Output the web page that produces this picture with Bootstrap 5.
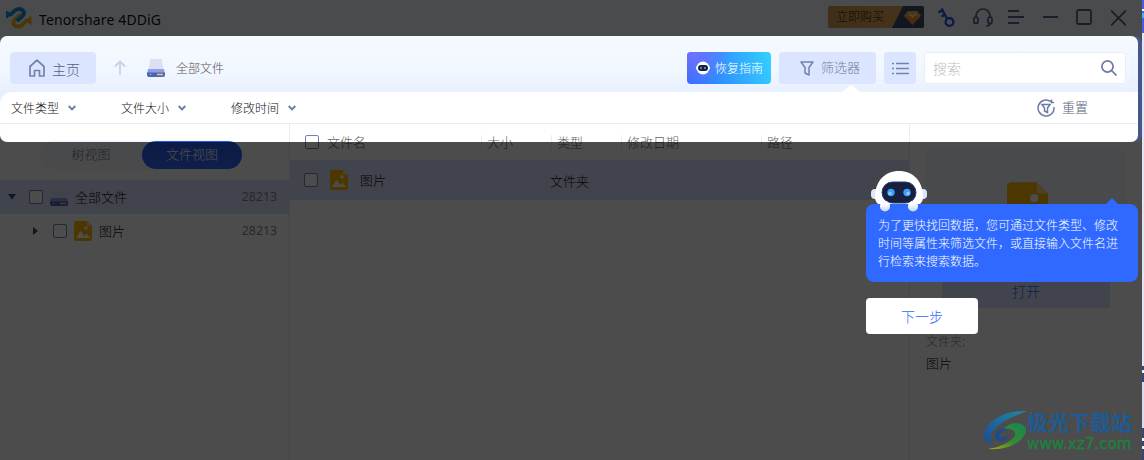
<!DOCTYPE html>
<html lang="zh-CN">
<head>
<meta charset="utf-8">
<title>Tenorshare 4DDiG</title>
<link href="https://cdn.jsdelivr.net/npm/bootstrap@5.3.0/dist/css/bootstrap.min.css" rel="stylesheet">
<style>
body{width:1144px;height:460px;overflow:hidden;background:#eef1f8;font-family:"Liberation Sans","Noto Sans CJK SC Light","Noto Sans CJK SC",sans-serif;font-weight:300;font-size:13px;line-height:18px;color:#111;position:relative}
svg{display:block;flex:none}
.app{width:1142px;height:460px;background:#fff}
.titlebar{height:36px;background:#f7fbff;padding-left:5px}
.brand{font:14px/18px "Noto Sans","Noto Sans CJK SC",sans-serif;letter-spacing:.13px;color:#10141f;margin:3px 0 0 7px}
.buy{width:96px;height:22px;background:linear-gradient(90deg,#d79e51,#e4a957 65%);border-radius:2px;font-size:12px;color:#231a10;overflow:hidden;margin-top:-3px}
.toolbar{height:56px;background:linear-gradient(#f5faff,#f2f7ff 60%,#e8f0fe)}
.tool{height:32px;background:#dbe5ff;border-radius:4px;color:#7581a5}
.guide{width:84px;background:linear-gradient(75deg,#2e6bff 0,#30a0ff 52%,#35d0ff 100%);color:#fff;font-size:12px;position:relative}
.guide:before{content:"";position:absolute;inset:0;border-radius:4px;background:radial-gradient(circle at 8% 0,#746fff 0,rgba(116,111,255,0) 45%)}
.guide>*{position:relative}
.search{width:202px;height:32px;background:#fff;border:1px solid #e7edfb;border-radius:4px;color:#bcbcbc;padding:0 8px}
.filters{height:32px;background:#fff;border-bottom:1px solid #e9ebf7;font-size:12px;border-radius:12px 16px 0 0;position:relative}
.filterwrap{background:#e8f0fe}
.notch{position:absolute;left:842px;top:-7px}
.fitem{width:110px}
.fitem span{padding-top:2px}
.side{width:290px;border-right:1px solid #e9ebf7}
.pills{width:202px;height:30px;margin:16px 0 0 40px;border-radius:15px;background:#f5f8ff;color:#777}
.pill-on{width:100px;height:28px;border-radius:14px;background:linear-gradient(180deg,#2a5be8,#3269f5);color:#fff}
.noderow{height:34px}
.sel{background:#dbe5ff}
.chk{width:14px;height:14px;border:1px solid #7682a8;border-radius:2px;background:#fff;flex:none}
.cnt{color:#888;font:12.3px/18px "Noto Sans",sans-serif}
.mainpane{width:620px;border-right:1px solid #e9ebf7}
.thead{height:36px;color:#666}
.hcell{border-left:1px solid #e9ebf7;height:14px;line-height:16px;padding-left:5px}
.filerow{height:40px}
.preview{width:200px;height:124px;background:#f5f8ff;border-radius:8px;margin:24px 0 0 16px}
.openbtn{width:168px;height:36px;border-radius:4px;color:#2f69ff;margin:0 0 0 32px;font-size:14px}
.spot{position:absolute;left:0;top:36px;width:1138px;height:106px;border-radius:7px;box-shadow:0 0 0 1200px rgba(0,0,0,.7);pointer-events:none}
.spotside{position:absolute;left:1130px;top:36px;width:12px;height:106px;background:#43578a;border-radius:0 7px 7px 0}
.spotside:before{content:"";position:absolute;left:0;top:0;width:8px;height:106px;border-radius:0 7px 7px 0;background:linear-gradient(#f5faff,#e8f0fe 56px,#fff 56px)}
.spotside:after{content:"";position:absolute;left:0;top:56px;width:8px;height:32px;background:linear-gradient(#fff,#fff 31px,#e9ebf7 31px);border-top-right-radius:8px}
.edge{position:absolute;left:1142px;top:0;width:2px;height:460px;background:linear-gradient(#4a5be0 0 9px,#fff 9px 11px,#4a5be0 11px 13px,#38b7e8 13px 18px,#4a5be0 18px 33px,#e2e4f0 33px 366px,#3c4470 366px 370px,#eef1f8 370px 373px,#3c4470 373px 382px,#d8dcec 382px 428px,#3c4470 428px 438px,#eef1f8 438px 441px,#3c4470 441px 446px,#eef1f8 446px 449px,#3c4470 449px)}
.tip{position:absolute;left:866px;top:204px;width:272px;height:78px;border-radius:8px;background:#2f69ff;color:#fff;font-size:12px;line-height:18px;padding:12.6px 0 0 12px}
.tip:after{content:"";position:absolute;right:20px;top:-6px;border:6px solid transparent;border-top:0;border-bottom-color:#2f69ff}
.bot{position:absolute;left:869px;top:169px}
.next{position:absolute;left:866px;top:298px;width:112px;height:36px;border-radius:4px;background:#fff;color:#2f69ff;font-size:14px;font-weight:300;border:0;padding:2px 0 0}
.wm{position:absolute;left:983px;top:408px}
.wm-cn{font:700 21px/24px "Noto Sans CJK SC",sans-serif;color:#1d5b96;white-space:nowrap}
.wm-url{font:15.2px/15px "DejaVu Sans",sans-serif;color:#1f8040;-webkit-text-stroke:.4px #1f8040;white-space:nowrap;margin-top:4px}
.wm-copy{position:absolute;left:44px;top:1px}
</style>
</head>
<body>
<svg width="0" height="0" class="position-absolute">
<defs>
<symbol id="disk" viewBox="0 0 18 18"><path d="M3 0h12l1.500 11h-15z" fill="#dbe1f2"/><path d="M1.200 10h15.600L18 14H0z" fill="#8d9fe8"/><path d="M0 13.500h18V16a2 2 0 0 1-2 2H2a2 2 0 0 1-2-2z" fill="#4d65ae"/><rect x="10" y="14.700" width="6" height="1.600" fill="#ecc16d"/><path d="M3 15.500h1" stroke="#8df0ff"/></symbol>
<symbol id="pic" viewBox="0 0 18 20"><path d="M2 0h11l5 5v13a2 2 0 0 1-2 2H2a2 2 0 0 1-2-2V2a2 2 0 0 1 2-2z" fill="#ffb800"/><path d="M13 0l5 5h-3.500A1.500 1.500 0 0 1 13 3.500z" fill="#ffd978"/><circle cx="12" cy="7" r="1.800" fill="#fff"/><path d="M2 17l4.500-7 4 5 2-2.500L16 17z" fill="#fff"/></symbol>
<symbol id="chev" viewBox="0 0 8 6"><path d="M.700 1l3.300 3.300L7.300 1" fill="none" stroke="#6c7ba7" stroke-width="1.900"/></symbol>
</defs>
</svg>

<div class="app d-flex flex-column">
  <header class="titlebar d-flex align-items-center">
    <svg width="27" height="24" viewBox="0 0 27 24" fill="none" stroke-width="4"><path d="M23 14C19 15 18 20.500 13.500 20.500 8 20.500 7 16 10.500 13L16 8" stroke="#f3b922"/><path d="M26.500 9.500v9.500l-7-4z" fill="#f3b922"/><path d="M4 9C8 8 9 3 13.500 3 19 3 20.500 7.500 17 10.500L12 15" stroke="#1595df"/><path d="M1 4.500V13l6-5z" fill="#1595df"/></svg>
    <span class="brand">Tenorshare 4DDiG</span>
    <div class="buy d-flex align-items-center ms-auto ps-2"><span>立即购买</span>
      <svg class="ms-auto" width="32" height="22" viewBox="0 0 32 22"><path d="M11 0h21v22H0z" fill="#3d4a70"/><path d="M16 5h9l4 5-8.500 9-8.500-9z" fill="#f29c22"/><path d="M16 5h9l4 5H12z" fill="#f5b24a"/><path d="M17.500 8l3 3 3-3" fill="none" stroke="#ffe8c4" stroke-width="1.800"/></svg></div>
    <svg style="margin-left:13px" width="18" height="22" viewBox="0 0 18 22" fill="none" stroke="#2459e8" stroke-width="2.300"><circle cx="12.500" cy="15" r="3.900"/><path d="M10 11.500L4.500 1.500M1.500 5.500l4.500-2.500M4.500 9.500l4-2.300"/></svg>
    <svg style="margin-left:17px" width="22" height="20" viewBox="0 0 22 20" fill="none" stroke="#58648c" stroke-width="1.700"><path d="M4 10V8a7 7 0 0 1 14 0v2"/><rect x="2" y="9" width="4" height="6.500" rx="2"/><rect x="16" y="9" width="4" height="6.500" rx="2"/><path d="M18 15c0 2-1.500 3-4 3"/></svg>
    <svg style="margin:-2px 0 0 14px" width="16" height="16" viewBox="0 0 16 16" stroke="#58648c" stroke-width="2"><path d="M0 2h11M0 8h16M0 14h11"/></svg>
    <svg style="margin:-2px 0 0 19px" width="15" height="16" viewBox="0 0 15 16" stroke="#58648c" stroke-width="2"><path d="M0 8h15"/></svg>
    <svg style="margin:-2px 0 0 18px" width="16" height="16" viewBox="0 0 16 16" fill="none" stroke="#58648c" stroke-width="1.800"><rect x="1" y="1" width="14" height="14" rx="1.500"/></svg>
    <svg style="margin:-1px 16px 0 19px" width="15" height="16" viewBox="0 0 15 16" stroke="#58648c" stroke-width="1.800"><path d="M0 .500l15 15M15 .500l-15 15"/></svg>
  </header>

  <div class="toolbar d-flex align-items-center pt-2">
    <div class="d-flex align-items-center w-100" style="padding:0 16px 0 10px">
      <div class="tool d-flex align-items-center" style="width:86px;padding-left:19px;font-size:14px;color:#59617a"><svg style="margin-right:7px" width="16" height="18" viewBox="0 0 16 18" fill="none" stroke="#7282ad" stroke-width="1.700" stroke-linejoin="round"><path d="M1 7.500L8 1.200l7 6.300V17h-4.500v-5.500h-5V17H1z"/></svg><span class="pt-1">主页</span></div>
      <svg style="margin:-2px 0 0 18px" width="12" height="15" viewBox="0 0 12 15" fill="none" stroke="#c8d1e8" stroke-width="1.800"><path d="M6 15V1.500M1 6.500l5-5 5 5"/></svg>
      <svg style="margin-left:21px" width="18" height="18"><use href="#disk"/></svg>
      <span style="margin-left:11px;font-size:12px;color:#555;padding-top:1px">全部文件</span>
      <div class="tool guide d-flex align-items-center ms-auto ps-2"><svg class="me-1" width="16" height="14" viewBox="0 0 16 14"><circle cx="8" cy="7" r="6.500" fill="#fff"/><rect x="1" y="5" width="14" height="4" rx="2" fill="#fff"/><rect x="3" y="4" width="10" height="6" rx="3" fill="#17203a"/><circle cx="6" cy="7" r="1" fill="#5ba4ff"/><circle cx="10" cy="7" r="1" fill="#5ba4ff"/></svg><span style="padding-top:2px">恢复指南</span></div>
      <div class="tool d-flex align-items-center ms-2" style="width:97px;padding-left:21px"><svg style="margin-right:7px" width="14" height="15" viewBox="0 0 14 15" fill="none" stroke="#7282ad" stroke-width="1.500" stroke-linejoin="round"><path d="M1 1h12L9 6.500V14l-4-2V6.500z"/></svg>筛选器</div>
      <div class="tool d-flex align-items-center justify-content-center ms-2" style="width:32px"><svg width="17" height="13" viewBox="0 0 17 13" stroke="#7282ad" stroke-width="1.500"><path d="M0 1.500h2M4 1.500h13M0 6.500h2M4 6.500h13M0 11.500h2M4 11.500h13"/></svg></div>
      <div class="search d-flex align-items-center justify-content-between ms-2"><span style="font-size:14px;padding-top:2px">搜索</span><svg width="16" height="16" viewBox="0 0 16 16" fill="none" stroke="#6c7ba7" stroke-width="1.700"><circle cx="6.500" cy="6.500" r="5.600"/><path d="M10.500 10.500l5 5"/></svg></div>
    </div>
  </div>

  <div class="filterwrap"><div class="filters d-flex align-items-center">
    <svg class="notch" width="18" height="7" viewBox="0 0 18 7"><path d="M0 7l9-7 9 7z" fill="#fff"/></svg>
    <div class="fitem d-flex align-items-center" style="margin-left:11px"><span>文件类型</span><svg style="margin-left:9px" width="8" height="6"><use href="#chev"/></svg></div>
    <div class="fitem d-flex align-items-center"><span>文件大小</span><svg style="margin-left:9px" width="8" height="6"><use href="#chev"/></svg></div>
    <div class="fitem d-flex align-items-center"><span>修改时间</span><svg style="margin-left:9px" width="8" height="6"><use href="#chev"/></svg></div>
    <div class="d-flex align-items-center ms-auto" style="margin-right:54px;font-size:13px;color:#59617a"><svg style="margin-right:7px" width="18" height="18" viewBox="0 0 18 18" fill="none" stroke="#6c7ba7" stroke-width="1.500"><path d="M17 8a8 8 0 1 1-3-5.300M14.500.500v3H17"/><path d="M5 5.500h8L10.500 9v4.500l-3-1.500V9z"/></svg><span style="padding-top:1px">重置</span></div>
  </div></div>

  <div class="d-flex flex-grow-1">
    <aside class="side">
      <div class="pills d-flex align-items-center justify-content-between"><span class="text-center flex-grow-1">树视图</span><span class="pill-on d-flex align-items-center justify-content-center">文件视图</span></div>
      <div class="noderow sel d-flex align-items-center" style="margin-top:10px;padding:0 12px 0 8px"><svg width="8" height="6"><path d="M0 0h8L4 5.500z" fill="#3f4c75"/></svg><span class="chk" style="margin-left:13px"></span><svg style="margin-left:7px" width="18" height="18"><use href="#disk"/></svg><span style="margin-left:7px;padding-top:2px">全部文件</span><span class="cnt ms-auto">28213</span></div>
      <div class="noderow d-flex align-items-center" style="padding:0 12px 0 33px"><svg width="5" height="8"><path d="M0 0v8l5-4z" fill="#3f4c75"/></svg><span class="chk" style="margin-left:15px"></span><svg style="margin-left:7px" width="18" height="20"><use href="#pic"/></svg><span style="margin-left:7px;padding-top:2px">图片</span><span class="cnt ms-auto">28213</span></div>
    </aside>
    <main class="mainpane">
      <div class="thead d-flex align-items-center"><div class="d-flex align-items-center" style="width:191px;padding-left:15px"><span class="chk"></span><span style="margin-left:8px;padding-top:1px">文件名</span></div><div class="hcell" style="width:70px">大小</div><div class="hcell" style="width:70px">类型</div><div class="hcell" style="width:140px">修改日期</div><div class="hcell">路径</div></div>
      <div class="filerow sel d-flex align-items-center" style="padding-left:14px"><span class="chk"></span><svg style="margin-left:12px" width="18" height="20"><use href="#pic"/></svg><span style="margin-left:12px;width:190px;padding-top:1px">图片</span><span class="pt-1">文件夹</span></div>
    </main>
    <section>
      <div class="preview d-flex justify-content-center" style="padding:34px 0 0 2px"><svg width="41" height="46"><use href="#pic"/></svg></div>
      <div class="openbtn sel d-flex align-items-center justify-content-center"><span class="pt-1">打开</span></div>
      <div style="margin:25px 0 0 16px;font-size:12px;color:#888">文件夹:</div>
      <div style="margin:4px 0 0 16px">图片</div>
    </section>
  </div>
</div>

<div class="spot"></div>
<div class="spotside"></div>
<div class="edge"></div>
<div class="tip">为了更快找回数据，您可通过文件类型、修改<br>时间等属性来筛选文件，或直接输入文件名进<br>行检索来搜索数据。</div>
<svg class="bot" width="60" height="44" viewBox="0 0 60 44"><defs><linearGradient id="hand" x2="0" y2="1"><stop offset=".3" stop-color="#fff"/><stop offset="1" stop-color="#bed3f5"/></linearGradient></defs><rect x="2" y="20" width="8" height="10" rx="4" fill="#dce8fa"/><rect x="50" y="20" width="8" height="10" rx="4" fill="#dce8fa"/><path d="M6 28C6 12 16 2 30 2s24 10 24 26c0 3-1 5-3 7H9c-2-2-3-4-3-7z" fill="#fff"/><rect x="13" y="13" width="34" height="21" rx="10.500" fill="#17203c" stroke="#263b80"/><circle cx="22" cy="23.500" r="3.700" fill="#3e9dff"/><circle cx="38" cy="23.500" r="3.700" fill="#3e9dff"/><circle cx="21" cy="24.500" r="1.800" fill="#83ceff"/><circle cx="39" cy="24.500" r="1.800" fill="#83ceff"/><rect x="11" y="32" width="10" height="10.500" rx="5" fill="url(#hand)"/><rect x="39" y="32" width="10" height="10.500" rx="5" fill="url(#hand)"/></svg>
<button class="next">下一步</button>
<div class="wm"><svg width="46" height="44" viewBox="0 0 46 44"><defs><linearGradient id="wb" x1="1" y1="0" x2="0" y2="1"><stop stop-color="#2387a5"/><stop offset="1" stop-color="#1c4b94"/></linearGradient><linearGradient id="wg" x1="1" y1="0" x2="0" y2="1"><stop stop-color="#198552"/><stop offset=".55" stop-color="#338c32"/><stop offset="1" stop-color="#b5a51c"/></linearGradient></defs><path d="M44 3C22 2 3 13 1 26c-1 7 4 10 10 10-6-4-4-11 4-18C22 11 32 8 44 3z" fill="url(#wb)"/><path d="M26 21c-9-2-16 4-13 10 3 5 13 1 13-5-2 3-7 5-9 3s2-6 9-8z" fill="#1c4b94"/><path d="M21 21c6-8 20-7 22 0 1 10-16 22-38 20 14-2 26-9 27-14 1-5-5-7-11-6z" fill="url(#wg)"/></svg>
<div class="wm-copy"><div class="wm-cn">极光下载站</div><div class="wm-url">www.xz7.com</div></div></div>
<script src="https://cdn.jsdelivr.net/npm/bootstrap@5.3.0/dist/js/bootstrap.bundle.min.js"></script>
</body>
</html>
